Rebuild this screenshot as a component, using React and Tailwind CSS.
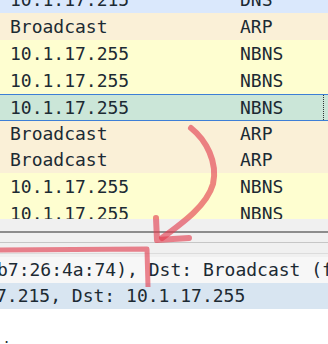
import React from 'react'

const rows = [
  { src: '10.1.17.215', proto: 'DNS', bg: 'bg-[#dae8fc]', h: 'h-[27px] -mt-[14px]' },
  { src: 'Broadcast', proto: 'ARP', bg: 'bg-[#faf0d7]', h: 'h-[27px]' },
  { src: '10.1.17.255', proto: 'NBNS', bg: 'bg-[#fefed0]', h: 'h-[27px]' },
  { src: '10.1.17.255', proto: 'NBNS', bg: 'bg-[#fefed0]', h: 'h-[27px]' },
  { src: '10.1.17.255', proto: 'NBNS', selected: true, h: 'h-[27px]' },
  { src: 'Broadcast', proto: 'ARP', bg: 'bg-[#faf0d7]', h: 'h-[26px]' },
  { src: 'Broadcast', proto: 'ARP', bg: 'bg-[#faf0d7]', h: 'h-[26px]' },
  { src: '10.1.17.255', proto: 'NBNS', bg: 'bg-[#fefed0]', h: 'h-[27px]' },
  { src: '10.1.17.255', proto: 'NBNS', bg: 'bg-[#fefed0]', h: 'h-[27px]' },
]

const PacketRow = ({ row }) => {
  if (row.selected) {
    return (
      <div className={`${row.h} shrink-0 flex bg-[#cbe6d8] border-y border-[#3d7fd6] pr-[4px]`}>
        <div className="flex flex-1 items-center border-r border-dotted border-[#333]">
          <span className="w-[240px] pl-[10px]">{row.src}</span>
          <span>{row.proto}</span>
        </div>
      </div>
    )
  }
  return (
    <div className={`${row.h} shrink-0 flex items-center ${row.bg}`}>
      <span className="w-[240px] pl-[10px]">{row.src}</span>
      <span>{row.proto}</span>
    </div>
  )
}

export default function App() {
  return (
    <div
      className="relative w-[328px] h-[344px] overflow-hidden bg-white text-[18px] leading-none text-[#1c2a33]"
      style={{ fontFamily: '"DejaVu Sans Mono", "Liberation Mono", monospace' }}
    >
      <div className="h-[219px] overflow-hidden flex flex-col whitespace-pre">
        {rows.map((r, i) => (
          <PacketRow key={i} row={r} />
        ))}
      </div>

      <div className="h-[38px] bg-[#f0f0f0] flex flex-col">
        <div className="h-[12px]" />
        <div className="h-[2px] bg-[#8c8c8c]" />
        <div className="h-[9px]" />
        <div className="h-px bg-[#c6c6c6]" />
        <div className="h-[10px]" />
        <div className="h-px bg-[#dcdcdc]" />
      </div>

      <div className="flex flex-col whitespace-pre">
        <div className="h-[26px] flex items-center bg-[#f7f7f7]">
          <span className="-ml-[3px]">b7:26:4a:74), Dst: Broadcast (ff:ff:ff:ff:ff:ff)</span>
        </div>
        <div className="h-[26px] flex items-center bg-[#d8e5f1]">
          <span className="-ml-[4px]">7.215, Dst: 10.1.17.255</span>
        </div>
        <div className="pt-[31px] pl-[1px]">i</div>
      </div>

      <svg
        className="absolute inset-0 pointer-events-none"
        width="328"
        height="344"
        viewBox="0 0 328 344"
        fill="none"
      >
        <g stroke="#e23a4c" strokeOpacity="0.62" strokeLinecap="round" strokeLinejoin="round">
          <path d="M191 128 C 206 140 218 162 213 184 C 207 205 184 222 162 238" strokeWidth="6" />
          <path d="M156 218 L157 240 L189 238" strokeWidth="6" />
          <path d="M-2 250 L147 249 L148 287" strokeWidth="5" strokeLinecap="butt" />
        </g>
      </svg>
    </div>
  )
}
